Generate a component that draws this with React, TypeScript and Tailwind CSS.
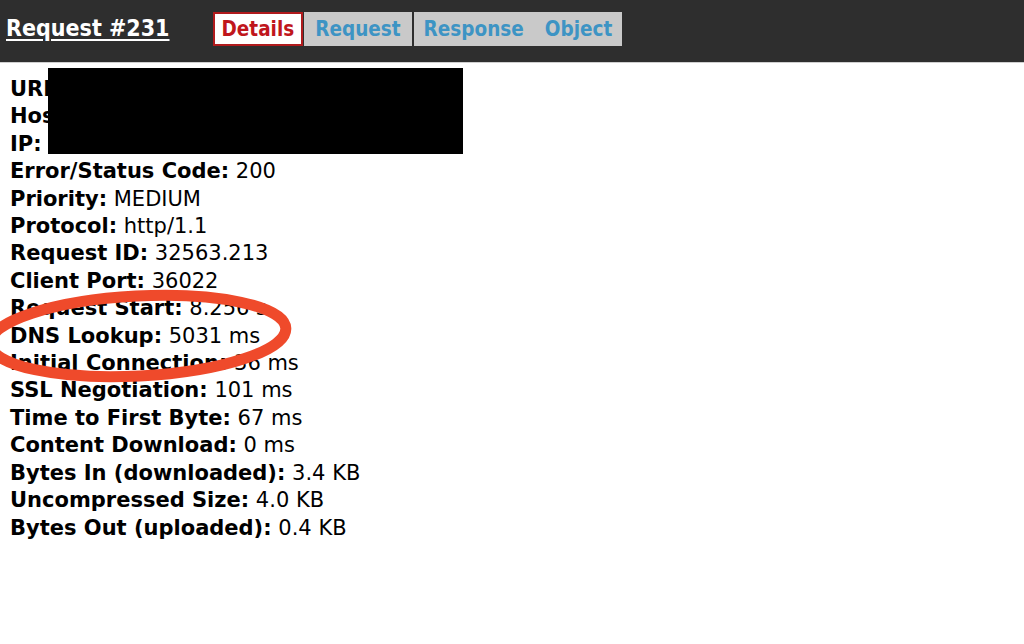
import React from 'react';

const ROWS: [string, string][] = [
  ["URL:", "https://example.com/"],
  ["Host:", "example.com"],
  ["IP:", "0.0.0.0"],
  ["Error/Status Code:", "200"],
  ["Priority:", "MEDIUM"],
  ["Protocol:", "http/1.1"],
  ["Request ID:", "32563.213"],
  ["Client Port:", "36022"],
  ["Request Start:", "8.256 s"],
  ["DNS Lookup:", "5031 ms"],
  ["Initial Connection:", "36 ms"],
  ["SSL Negotiation:", "101 ms"],
  ["Time to First Byte:", "67 ms"],
  ["Content Download:", "0 ms"],
  ["Bytes In (downloaded):", "3.4 KB"],
  ["Uncompressed Size:", "4.0 KB"],
  ["Bytes Out (uploaded):", "0.4 KB"],
];

export default function App() {
  return (
    <div className="relative w-[1024px] h-[644px] bg-white overflow-hidden">
      {/* Header */}
      <div className="flex items-start h-[63px] pt-[12px] bg-[#2e2e2e] border-b border-[#cfcfcf] font-['DejaVu_Sans_Condensed','DejaVu_Sans',sans-serif] font-bold">
        <a className="ml-[6px] mt-[1px] text-white text-[23px] leading-[30px] underline underline-offset-[3px]">
          Request #231
        </a>
        <div className="ml-[43px] flex items-stretch h-[34px] text-[20.5px]">
          <span className="flex items-center px-[7px] bg-white border-2 border-[#b01a1c] text-[#c0161c]">Details</span>
          <span className="flex items-center px-[11px] ml-[1px] bg-[#c9c9c9] text-[#3d94c4]">Request</span>
          <div className="flex items-center ml-[2px] bg-[#c9c9c9] text-[#3d94c4] gap-[21px] px-[10px]">
            <span>Response</span>
            <span>Object</span>
          </div>
        </div>
      </div>

      {/* Details list */}
      <div className="pl-[10px] pt-[13px] font-['DejaVu_Sans',sans-serif] text-[21px] leading-[27.4px] text-black">
        {ROWS.map(([k, v]) => (
          <div key={k} className="whitespace-nowrap">
            <span className="font-bold">{k}</span> {v}
          </div>
        ))}
      </div>

      {/* Redaction */}
      <div className="absolute left-[48px] top-[68px] w-[415px] h-[86px] bg-black" />

      {/* Highlight ellipse */}
      <svg className="absolute left-0 top-[285px]" width="320" height="110" viewBox="0 0 320 110">
        <ellipse cx="138" cy="51" rx="148" ry="40" fill="none" stroke="#ef4a2b" strokeWidth="11" transform="rotate(-3 138 51)" />
      </svg>
    </div>
  );
}
